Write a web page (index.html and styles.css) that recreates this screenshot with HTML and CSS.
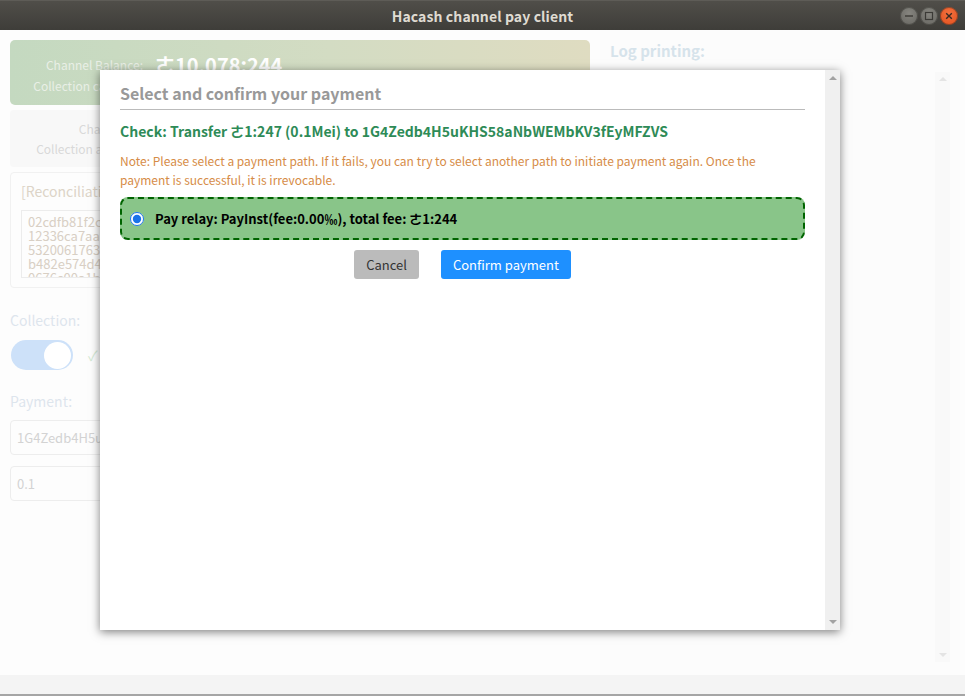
FILE: index.html
```html
<!DOCTYPE html>
<html lang="en">
<head>
<meta charset="utf-8">
<title>Hacash channel pay client</title>
<link rel="stylesheet" href="styles.css">
</head>
<body>
<div class="window">
  <header class="titlebar">
    <div></div>
    <div class="title">Hacash channel pay client</div>
    <div class="controls">
      <span class="wbtn min"><svg width="18" height="18" viewBox="0 0 18 18"><path d="M5 9h8" stroke="#3b3a36" stroke-width="1.4"/></svg></span>
      <span class="wbtn max"><svg width="18" height="18" viewBox="0 0 18 18"><rect x="5.5" y="5.5" width="7" height="7" fill="none" stroke="#3b3a36" stroke-width="1.2"/></svg></span>
      <span class="wbtn close"><svg width="18" height="18" viewBox="0 0 18 18"><path d="M6.2 6.2l5.6 5.6M11.8 6.2l-5.6 5.6" stroke="#3b2a22" stroke-width="1.4"/></svg></span>
    </div>
  </header>

  <main class="app">
    <section class="left">
      <div class="balance">
        <span class="b-label">Channel Balance:</span>
        <span class="b-value">ㄜ10,078:244</span>
        <span class="b-label">Collection capacity:</span>
        <span class="b-sub">ㄜ10,078:244</span>
      </div>

      <div class="info">
        <span class="i-label">Channel ID:</span>
        <span class="i-val">8f2a3c1d</span>
        <span class="i-label">Collection address:</span>
        <span class="i-val">1G4Zedb4H5uKHS58aNbWEMbKV3fEyMFZVS</span>
      </div>

      <div class="recon">
        <div class="recon-title">[Reconciliation bill]</div>
        <div class="recon-text">02cdfb81f2c5a6e0b1<br>12336ca7aad9b30e8c<br>5320061763f4e7ad21<br>b482e574d4c0f2a9e3<br>0676c00a1b2c</div>
      </div>

      <div class="label">Collection:</div>
      <div class="toggle-row">
        <span class="toggle"><span class="knob"></span></span>
        <span class="tick">✓</span>
      </div>

      <div class="label pay">Payment:</div>
      <div class="field f1">1G4Zedb4H5uKHS58aNbWEMbKV3fEyMFZVS</div>
      <div class="field f2">0.1</div>
    </section>

    <section class="right">
      <div class="log-title">Log printing:</div>
      <div class="log-box">
        <div class="log-content"></div>
        <div class="log-scroll"><span class="arr up"></span><span class="arr down"></span></div>
      </div>
    </section>
  </main>

  <footer class="dock"></footer>
</div>

<div class="modal">
  <div class="modal-body">
    <h2 class="m-title">Select and confirm your payment</h2>
    <div class="check">Check: Transfer ㄜ1:247 (0.1Mei) to 1G4Zedb4H5uKHS58aNbWEMbKV3fEyMFZVS</div>
    <p class="note">Note: Please select a payment path. If it fails, you can try to select another path to initiate payment again. Once the payment is successful, it is irrevocable.</p>
    <label class="option">
      <input type="radio" name="path" checked>
      <span>Pay relay: PayInst(fee:0.00‰), total fee: ㄜ1:244</span>
    </label>
    <div class="actions">
      <button class="btn cancel">Cancel</button>
      <button class="btn confirm">Confirm payment</button>
    </div>
  </div>
  <div class="m-scroll"><span class="arr up dark"></span><span class="arr down dark"></span></div>
</div>
</body>
</html>
```

FILE: styles.css
```css
* { box-sizing: border-box; }

html, body {
  margin: 0;
  padding: 0;
  width: 965px;
  height: 696px;
  overflow: hidden;
  background: #fdfdfd;
  font-family: "Noto Sans CJK SC", "Noto Sans", sans-serif;
}

.window {
  display: flex;
  flex-direction: column;
  height: 696px;
}

/* ---------- title bar ---------- */
.titlebar {
  height: 30px;
  flex: none;
  display: grid;
  grid-template-columns: 1fr auto 1fr;
  align-items: center;
  background: linear-gradient(#504e49, #3e3d39);
  border-top: 1px solid #5e5c57;
}
.title {
  color: #dfdbd2;
  font-family: "Noto Sans CJK SC", "Noto Sans", sans-serif;
  font-weight: 700;
  font-size: 14px;
  letter-spacing: 0.1px;
}
.controls {
  justify-self: end;
  display: flex;
  gap: 2px;
  padding-right: 7px;
  padding-top: 1px;
}
.wbtn {
  width: 18px;
  height: 18px;
  border-radius: 50%;
  display: block;
  background: radial-gradient(circle at 50% 35%, #86857f, #65645f);
  box-shadow: inset 0 0 0 1px rgba(40,40,36,.45);
}
.wbtn svg { display: block; }
.wbtn.close {
  background: radial-gradient(circle at 50% 35%, #f4713e, #e14e1c);
}

/* ---------- background app (faded under modal) ---------- */
.app {
  height: 645px;
  flex: none;
  display: flex;
}
.left {
  width: 580px;
  margin-left: 10px;
  padding-top: 10px;
  display: flex;
  flex-direction: column;
}

.balance {
  height: 65px;
  border-radius: 5px;
  background: linear-gradient(90deg, #c4d9c0, #d3dcc3 55%, #dfdcc1);
  display: grid;
  grid-template-columns: 133px 1fr;
  grid-template-rows: 27px 14px;
  column-gap: 12px;
  padding-top: 11px;
  align-items: center;
}
.b-label {
  justify-self: end;
  color: #e9efe6;
  font-size: 12px;
}
.b-value {
  color: #ffffff;
  font-size: 20px;
  font-weight: 700;
  line-height: 27px;
}
.b-sub {
  color: #f2f4ee;
  font-size: 12px;
}

.info {
  margin-top: 5px;
  height: 57px;
  background: #f8f8f8;
  border-radius: 4px;
  display: grid;
  grid-template-columns: 133px 1fr;
  grid-template-rows: 20px 20px;
  column-gap: 8px;
  align-content: center;
  align-items: center;
  padding-bottom: 1px;
}
.i-label {
  justify-self: end;
  color: #d9d9d9;
  font-size: 12px;
}
.i-val {
  color: #dadada;
  font-size: 12px;
}

.recon {
  margin-top: 5px;
  height: 116px;
  border: 1px solid #f1f1f1;
  border-radius: 4px;
  padding: 8px 10px 0;
}
.recon-title {
  color: #dcd4c7;
  font-size: 14px;
  line-height: 20px;
}
.recon-text {
  margin-top: 9px;
  height: 68px;
  width: 300px;
  border: 1px solid #ececec;
  padding: 4px 6px 0;
  color: #d8cfc4;
  font-size: 13px;
  line-height: 14px;
  overflow: hidden;
}

.label {
  margin-top: 20px;
  color: #dde5ed;
  font-size: 14px;
  line-height: 24px;
}
.toggle-row {
  margin-top: 8px;
  display: flex;
  align-items: center;
  gap: 15px;
  padding-left: 1px;
}
.toggle {
  width: 62px;
  height: 30px;
  border-radius: 15px;
  background: #cde1f9;
  display: flex;
  justify-content: flex-end;
  align-items: center;
  padding-right: 2px;
}
.knob {
  width: 27px;
  height: 27px;
  border-radius: 50%;
  background: #ffffff;
}
.tick {
  color: #d4e9d4;
  font-size: 14px;
}
.label.pay { margin-top: 19px; }

.field {
  height: 35px;
  border: 1px solid #ededed;
  border-radius: 4px;
  display: flex;
  align-items: center;
  padding-left: 6px;
  color: #d3d3d3;
  font-size: 13px;
}
.f1 { margin-top: 7px; }
.f2 { margin-top: 11px; }

.right {
  margin-left: 10px;
  width: 360px;
  background: #fcfcfc;
  padding: 10px 10px 0 10px;
}
.log-title {
  color: #d6e3eb;
  font-size: 15px;
  font-weight: 700;
  line-height: 22px;
}
.log-box {
  margin-top: 10px;
  height: 590px;
  display: flex;
}
.log-content { flex: 1; }
.log-scroll {
  width: 15px;
  background: #f9f9f9;
  display: flex;
  flex-direction: column;
  justify-content: space-between;
  align-items: center;
  padding: 5px 0;
}
.arr {
  width: 0;
  height: 0;
  border-left: 4px solid transparent;
  border-right: 4px solid transparent;
}
.arr.up { border-bottom: 4px solid #e4e4e4; }
.arr.down { border-top: 4px solid #e4e4e4; }
.arr.up.dark { border-bottom-color: #a3a3a3; }
.arr.down.dark { border-top-color: #a3a3a3; }

.dock {
  flex: none;
  height: 21px;
  background: #f4f4f4;
  border-bottom: 2px solid #a5a5a5;
}

/* ---------- modal ---------- */
.modal {
  position: absolute;
  left: 100px;
  top: 70px;
  width: 740px;
  height: 560px;
  background: #ffffff;
  box-shadow: 0 2px 9px rgba(0,0,0,.5);
  display: flex;
}
.modal-body {
  flex: 1;
  padding: 12px 20px 0;
}
.m-scroll {
  width: 15px;
  background: #f0f0f0;
  display: flex;
  flex-direction: column;
  justify-content: space-between;
  align-items: center;
  padding: 6px 0 6px;
}
.m-title {
  margin: 0;
  font-size: 16px;
  font-weight: 700;
  color: #999999;
  line-height: 22px;
  padding-bottom: 5px;
  border-bottom: 1px solid #bbbbbb;
}
.check {
  margin-top: 11px;
  font-size: 14px;
  font-weight: 700;
  color: #2e8b57;
  line-height: 20px;
}
.note {
  margin: 10px 0 0;
  font-size: 12px;
  line-height: 19px;
  color: #d68c47;
}
.option {
  margin-top: 8px;
  height: 43px;
  display: flex;
  align-items: center;
  background: #89c589;
  border: 2px dashed #006400;
  border-radius: 8px;
  padding-left: 8px;
  font-size: 13px;
  font-weight: 700;
  color: #000000;
}
.option input {
  margin: 0 11px 0 0;
  width: 14px;
  height: 14px;
  accent-color: #1a73e8;
}
.actions {
  margin-top: 10px;
  display: flex;
  justify-content: center;
  gap: 22px;
}
.btn {
  height: 29px;
  border: none;
  border-radius: 3px;
  padding: 0 12px;
  font-family: "Noto Sans CJK SC", "Noto Sans", sans-serif;
  font-size: 13px;
}
.btn.cancel {
  background: #bbbbbb;
  color: #333333;
}
.btn.confirm {
  background: #1e90ff;
  color: #ffffff;
}
```
